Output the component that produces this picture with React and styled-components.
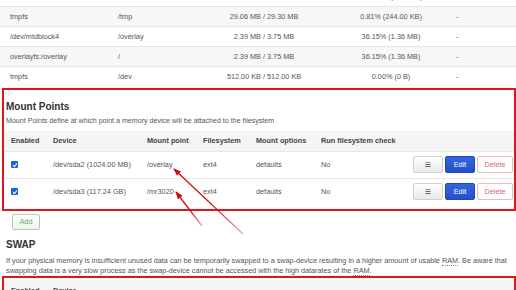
import React from "react";
import styled, { createGlobalStyle } from "styled-components";

const GlobalStyle = createGlobalStyle`
  body {
    margin: 0;
    background: #fff;
    font-family: "Liberation Sans", Arial, sans-serif;
    font-size: 7.3px;
    color: #555;
    overflow: hidden;
  }
  * { box-sizing: border-box; }
`;

const Page = styled.div`
  position: relative;
  width: 516px;
  height: 290px;
  overflow: hidden;
`;

const UsageTable = styled.div`
  margin-top: -14px;
`;

const UsageRow = styled.div`
  display: grid;
  grid-template-columns: 108px 94px 124px 130px 1fr;
  height: 20px;
  align-items: center;
  border-top: 1px solid #e6e6e6;
  background: ${(p) => (p.$striped ? "#f7f7f7" : "#fff")};
`;

const UsageCell = styled.div`
  padding: 0 ${(p) => (p.$flush ? "0" : "10px")};
  text-align: ${(p) => p.$align || "left"};
  white-space: nowrap;
`;

const Section = styled.section`
  margin: ${(p) => p.$top || "2px"} 0 0 2px;
  border: 2px solid #e3141c;
  padding: ${(p) => p.$pad || "11px 0 4px 0"};
`;

const Heading = styled.h3`
  margin: ${(p) => p.$margin || "0 0 0 2px"};
  font-size: 10px;
  line-height: 11.5px;
  font-weight: bold;
  color: #333;
`;

const Description = styled.p`
  margin: ${(p) => p.$margin || "3px 0 5px 2px"};
  font-size: ${(p) => p.$size || "7.1px"};
  line-height: ${(p) => p.$lh || "10px"};
  color: #555;
`;

const Abbr = styled.abbr`
  text-decoration: none;
  border-bottom: 1px dotted #888;
`;

const MountRow = styled.div`
  display: grid;
  grid-template-columns: 42px 94px 56px 53px 65px 1fr auto;
  align-items: center;
  height: ${(p) => (p.$head ? "20px" : "27px")};
  background: ${(p) => (p.$head ? "#f5f5f5" : "#fff")};
  border-top: ${(p) => (p.$head ? "none" : "1px solid #e6e6e6")};
  font-weight: ${(p) => (p.$head ? "bold" : "normal")};
  color: ${(p) => (p.$head ? "#444" : "#555")};
`;

const MountCell = styled.div`
  padding-left: 7px;
  white-space: nowrap;
  display: flex;
  align-items: center;
`;

const Actions = styled.div`
  display: flex;
  gap: 2px;
  padding-right: 1px;
`;

const Check = styled.span`
  display: inline-flex;
  align-items: center;
  justify-content: center;
  width: 7px;
  height: 7px;
  border-radius: 1px;
  background: #1d63d8;
`;

const Button = styled.button`
  height: 17px;
  width: ${(p) => p.$w || "30px"};
  padding: 0;
  font-family: inherit;
  font-size: 7.3px;
  border-radius: 2px;
  cursor: pointer;
  ${(p) =>
    p.$kind === "edit"
      ? `background: linear-gradient(#3566dc, #2350c9); border: 1px solid #1f47b8; color: #fff;`
      : p.$kind === "remove"
      ? `background: #fff; border: 1px solid #ebbcbc; color: #d96b6b;`
      : p.$kind === "add"
      ? `background: linear-gradient(#fff, #eef5ee); border: 1px solid #a9d3a5; color: #5cae55;`
      : `background: linear-gradient(#fff, #e9e9e9); border: 1px solid #d0d0d0; color: #444; font-family: "DejaVu Sans", sans-serif; font-size: 7px;`}
`;

const AddButton = styled(Button)`
  margin: 3px 0 0 12px;
  height: 16px;
  display: block;
`;

const SwapText = styled(Description)`
  white-space: nowrap;
`;

const Arrows = styled.svg`
  position: absolute;
  left: 0;
  top: 0;
  pointer-events: none;
`;

const usage = [
  ["/dev/root", "/rom", "2.25 MB / 2.25 MB", "100.00% (2.25 MB)", "-"],
  ["tmpfs", "/tmp", "29.06 MB / 29.30 MB", "0.81% (244.00 KB)", "-"],
  ["/dev/mtdblock4", "/overlay", "2.39 MB / 3.75 MB", "36.15% (1.36 MB)", "-"],
  ["overlayfs:/overlay", "/", "2.39 MB / 3.75 MB", "36.15% (1.36 MB)", "-"],
  ["tmpfs", "/dev", "512.00 KB / 512.00 KB", "0.00% (0 B)", "-"],
];

const mounts = [
  ["/dev/sda2 (1024.00 MB)", "/overlay", "ext4", "defaults", "No"],
  ["/dev/sda3 (117.24 GB)", "/mr3020", "ext4", "defaults", "No"],
];

const CheckMark = () => (
  <Check>
    <svg width="6" height="6" viewBox="0 0 6 6">
      <path d="M1 3.2 L2.4 4.6 L5 1.5" stroke="#fff" strokeWidth="1.1" fill="none" />
    </svg>
  </Check>
);

export default function App() {
  return (
    <Page>
      <GlobalStyle />
      <UsageTable>
        {usage.map((r, i) => (
          <UsageRow key={i} $striped={i % 2 === 1}>
            <UsageCell>{r[0]}</UsageCell>
            <UsageCell>{r[1]}</UsageCell>
            <UsageCell $align="center">{r[2]}</UsageCell>
            <UsageCell $align="center">{r[3]}</UsageCell>
            <UsageCell $flush>{r[4]}</UsageCell>
          </UsageRow>
        ))}
      </UsageTable>

      <Section>
        <Heading>Mount Points</Heading>
        <Description>
          Mount Points define at which point a memory device will be attached to the filesystem
        </Description>
        <MountRow $head>
          <MountCell>Enabled</MountCell>
          <MountCell>Device</MountCell>
          <MountCell>Mount point</MountCell>
          <MountCell>Filesystem</MountCell>
          <MountCell>Mount options</MountCell>
          <MountCell>Run filesystem check</MountCell>
          <MountCell />
        </MountRow>
        {mounts.map((m, i) => (
          <MountRow key={i}>
            <MountCell>
              <CheckMark />
            </MountCell>
            {m.map((v, j) => (
              <MountCell key={j}>{v}</MountCell>
            ))}
            <Actions>
              <Button>☰</Button>
              <Button $kind="edit">Edit</Button>
              <Button $kind="remove" $w="36px">Delete</Button>
            </Actions>
          </MountRow>
        ))}
      </Section>

      <AddButton $kind="add" $w="28px">Add</AddButton>

      <Heading $margin="9px 0 0 6px">SWAP</Heading>
      <SwapText $margin="6px 0 1px 6px" $lh="9.5px" $size="7.25px">
        If your physical memory is insufficient unused data can be temporarily swapped to a
        swap-device resulting in a higher amount of usable <Abbr>RAM</Abbr>. Be aware that
        <br />
        swapping data is a very slow process as the swap-device cannot be accessed with the
        high datarates of the <Abbr>RAM</Abbr>.
      </SwapText>

      <Section $top="0" $pad="2px 0 0 0">
        <MountRow $head>
          <MountCell>Enabled</MountCell>
          <MountCell>Device</MountCell>
        </MountRow>
      </Section>

      <Arrows width="516" height="290" viewBox="0 0 516 290">
        <defs>
          <marker id="head" markerWidth="8" markerHeight="6" refX="7" refY="3" orient="auto" markerUnits="userSpaceOnUse">
            <path d="M0,0 L8,3 L0,6 z" fill="#d90b0b" />
          </marker>
          <linearGradient id="fade1" gradientUnits="userSpaceOnUse" x1="243" y1="234" x2="174" y2="169">
            <stop offset="0" stopColor="#d90b0b" stopOpacity="0.35" />
            <stop offset="0.5" stopColor="#d90b0b" stopOpacity="1" />
          </linearGradient>
          <linearGradient id="fade2" gradientUnits="userSpaceOnUse" x1="202" y1="226" x2="176" y2="192">
            <stop offset="0" stopColor="#d90b0b" stopOpacity="0.35" />
            <stop offset="0.5" stopColor="#d90b0b" stopOpacity="1" />
          </linearGradient>
        </defs>
        <line x1="243" y1="234" x2="174" y2="169" stroke="url(#fade1)" strokeWidth="1.3" markerEnd="url(#head)" />
        <line x1="202" y1="226" x2="176" y2="192" stroke="url(#fade2)" strokeWidth="1.3" markerEnd="url(#head)" />
      </Arrows>
    </Page>
  );
}
